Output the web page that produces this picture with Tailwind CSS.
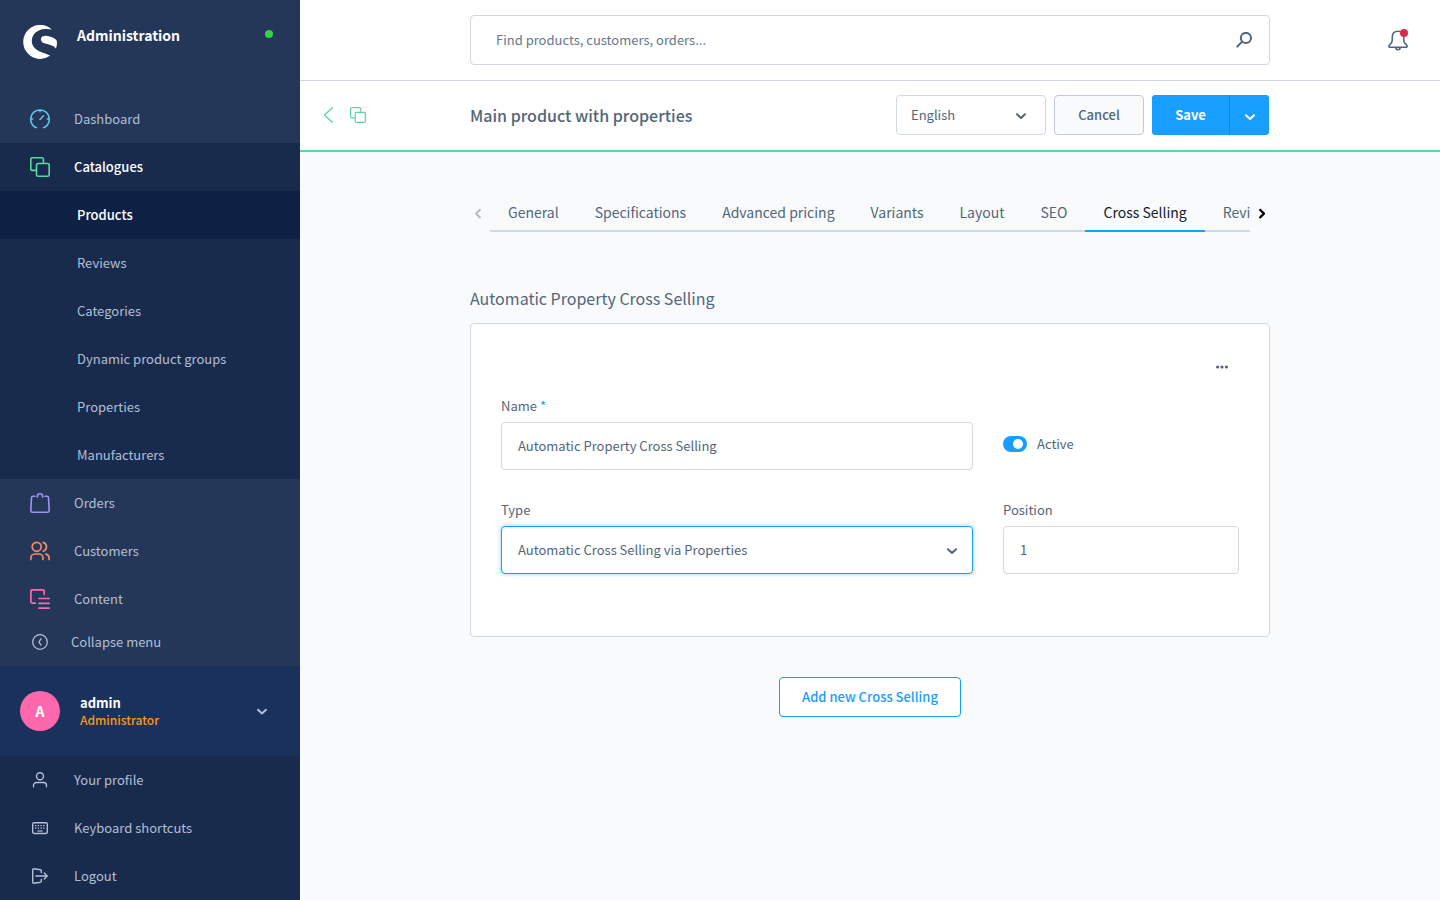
<!DOCTYPE html>
<html lang="en">
<head>
<meta charset="utf-8">
<meta name="viewport" content="width=device-width, initial-scale=1">
<title>Main product with properties | Administration</title>
<script src="https://cdn.jsdelivr.net/npm/@tailwindcss/browser@4"></script>
</head>
<body class="flex h-screen overflow-hidden bg-[#f9fafc] font-['Noto_Sans_CJK_SC','Noto_Sans',sans-serif] text-[13px] leading-5 text-[#52667a]">

<aside class="flex w-[300px] shrink-0 flex-col overflow-hidden bg-[#243758] text-[#b3bfd5]">
  <header class="flex h-[95px] shrink-0 items-start pl-[23px] pr-[27px] pt-[25px]">
    <svg class="size-[34px] shrink-0" viewBox="0 0 34 34" fill="#fff" aria-hidden="true">
      <path d="M28.800 4.400A17 17 0 1 0 27 30.800C26.500 29.500 21 28.400 16.300 26.200C11.500 23.800 8.800 20.500 8.800 16C8.800 9 14.500 4.500 22 4C25 3.800 27 4.100 28.800 4.400Z"/>
      <path d="M32.900 23.400C31.300 21.300 27 19.600 22.500 18.600C19.300 17.800 17.900 16.200 17.900 14.200C17.900 11.800 20.500 10.600 24 10.900C28 11.300 31.800 12.800 33.700 15.400C34.200 18 34 21 32.900 23.400Z"/>
    </svg>
    <h2 class="ml-5 flex-1 text-[14px] font-bold text-white">Administration</h2>
    <span class="mt-[5px] size-2 rounded-full bg-[#37d046]"></span>
  </header>

  <nav class="shrink-0" aria-label="Main">
    <a href="#" class="flex h-12 items-center gap-6 pl-[30px]">
      <svg class="size-5" viewBox="0 0 20 20" fill="none" stroke="#5fc8e8" stroke-width="1.500" stroke-linecap="round" aria-hidden="true"><path d="M6.500 18.400H5.500A9.300 9.300 0 1 1 14.500 18.400H13.500M10 .8V2.700M.8 10H2.700M17.300 10H19.200M10 10.500L13.500 6.700"/></svg>
      Dashboard</a>
    <a href="#" class="flex h-12 items-center gap-6 bg-[#182b4d] pl-[30px] font-medium text-white">
      <svg class="size-5" viewBox="0 0 20 20" fill="none" stroke="#57d9a3" stroke-width="1.600" aria-hidden="true"><path d="M6 13.400H2.200A1.500 1.500 0 0 1 .8 11.900V2.200A1.500 1.500 0 0 1 2.200 .8H11.900A1.500 1.500 0 0 1 13.400 2.200V6"/><rect x="6.500" y="6.500" width="12.700" height="12.700" rx="1.500"/></svg>
      Catalogues</a>
    <ul class="bg-[#182b4d]">
      <li><a href="#" aria-current="page" class="flex h-12 items-center bg-[#0e2145] pl-[77px] font-medium text-white">Products</a></li>
      <li><a href="#" class="flex h-12 items-center pl-[77px]">Reviews</a></li>
      <li><a href="#" class="flex h-12 items-center pl-[77px]">Categories</a></li>
      <li><a href="#" class="flex h-12 items-center pl-[77px]">Dynamic product groups</a></li>
      <li><a href="#" class="flex h-12 items-center pl-[77px]">Properties</a></li>
      <li><a href="#" class="flex h-12 items-center pl-[77px]">Manufacturers</a></li>
    </ul>
    <a href="#" class="flex h-12 items-center gap-6 pl-[30px]">
      <svg class="size-5" viewBox="0 0 20 20" fill="none" stroke="#a092f0" stroke-width="1.600" stroke-linecap="round" stroke-linejoin="round" aria-hidden="true"><path d="M7.400 4.300V3.400A2.600 2.600 0 0 1 12.600 3.400V4.300M5 3.300H2.800A1.300 1.300 0 0 0 1.500 4.500L.8 17.800A1.400 1.400 0 0 0 2.100 19.200H17.900A1.400 1.400 0 0 0 19.200 17.800L18.500 4.500A1.300 1.300 0 0 0 17.200 3.300H15"/></svg>
      Orders</a>
    <a href="#" class="flex h-12 items-center gap-6 pl-[30px]">
      <svg class="size-5" viewBox="0 0 20 20" fill="none" stroke="#f88962" stroke-width="1.700" stroke-linecap="round" aria-hidden="true"><circle cx="6.700" cy="5.800" r="4.500"/><path d="M.9 18.500V17A4 4 0 0 1 4.800 13H9A4 4 0 0 1 13 17V18.500M13.200 1.400A4.600 4.600 0 0 1 13.200 10.200M15.800 13.200A4 4 0 0 1 19.100 17V18.500"/></svg>
      Customers</a>
    <a href="#" class="flex h-12 items-center gap-6 pl-[30px]">
      <svg class="size-5" viewBox="0 0 20 20" fill="none" stroke="#ff68b4" stroke-width="1.700" stroke-linecap="round" aria-hidden="true"><path d="M5.300 14.200H2.200A1.500 1.500 0 0 1 .9 12.700V2.200A1.500 1.500 0 0 1 2.200 .9H12.700A1.500 1.500 0 0 1 14.200 2.200V5.300M9 9.500H19.100M9 14.300H19.100M9 19.100H19.100"/></svg>
      Content</a>
  </nav>

  <button type="button" class="flex h-[43px] shrink-0 items-center gap-[23px] pb-1.5 pl-8 text-left">
    <svg class="size-4" viewBox="0 0 16 16" fill="none" stroke="currentColor" stroke-linecap="round" stroke-linejoin="round" aria-hidden="true"><circle cx="8" cy="8" r="7.300" stroke-width="1.300"/><path stroke-width="1.300" d="M9 4.800L6.900 8L9 11.200"/></svg>
    Collapse menu</button>

  <button type="button" aria-expanded="true" class="flex h-[90px] shrink-0 items-center bg-[#1a315c] pl-5 pr-8 text-left">
    <span class="flex size-10 items-center justify-center rounded-full bg-[#ff68ac] text-[14px] font-bold text-white">A</span>
    <span class="ml-5 flex flex-1 flex-col">
      <span class="leading-[18px] font-bold text-white">admin</span>
      <span class="text-[12px] leading-4 font-medium text-[#ff9512]">Administrator</span>
    </span>
    <svg class="h-3 w-3" viewBox="0 0 12 12" fill="none" stroke="#b3bfd5" stroke-width="2" stroke-linecap="round" stroke-linejoin="round" aria-hidden="true"><path d="M2 4.800L6 8.500L10 4.800"/></svg>
  </button>

  <nav class="flex-1 bg-[#182b4d]" aria-label="Account">
    <a href="#" class="flex h-12 items-center gap-[26px] pl-8">
      <svg class="size-4" viewBox="0 0 16 16" fill="none" stroke="currentColor" stroke-width="1.400" stroke-linecap="round" aria-hidden="true"><circle cx="8" cy="4.300" r="3.500"/><path d="M1.500 14.800V13.500A3 3 0 0 1 4.500 10.500H11.500A3 3 0 0 1 14.500 13.500V14.800"/></svg>
      Your profile</a>
    <a href="#" class="flex h-12 items-center gap-[26px] pl-8">
      <svg class="size-4" viewBox="0 0 16 16" fill="none" stroke="currentColor" stroke-width="1.400" aria-hidden="true"><rect x=".7" y="2.700" width="14.600" height="10.800" rx="1.500"/><path stroke-width="1.200" stroke-dasharray="1.400 1.300" d="M3 5.600H13.400M3 8.200H13.400"/><path stroke-width="1.200" d="M5.300 11H10.700"/></svg>
      Keyboard shortcuts</a>
    <a href="#" class="flex h-12 items-center gap-[26px] pl-8">
      <svg class="size-4" viewBox="0 0 16 16" fill="none" stroke="currentColor" stroke-width="1.400" stroke-linecap="round" stroke-linejoin="round" aria-hidden="true"><path d="M9.300 4.500V2.700A1 1 0 0 0 8.500 1.700L1.800 .8A1 1 0 0 0 .7 1.700V14.300A1 1 0 0 0 1.800 15.200L8.500 14.300A1 1 0 0 0 9.300 13.300V11.500M3.800 8H15.200M12.300 5L15.200 8L12.300 11"/></svg>
      Logout</a>
  </nav>
</aside>

<div class="flex min-w-0 flex-1 flex-col">
  <header class="grid h-[81px] shrink-0 grid-cols-[1fr_minmax(0,800px)_1fr] items-center border-b border-[#d1d9e0] bg-white">
    <form role="search" class="col-start-2 flex h-[50px] items-center rounded border border-[#d1d9e0] pl-[25px] pr-[17px]">
      <input type="search" aria-label="Search" placeholder="Find products, customers, orders..." class="min-w-0 flex-1 leading-6 outline-none placeholder:text-[#66788a]">
      <button type="submit" aria-label="Search">
        <svg class="size-4" viewBox="0 0 16 16" fill="none" stroke="#52667a" stroke-width="2" stroke-linecap="round" aria-hidden="true"><circle cx="9.900" cy="6" r="5.100"/><path d="M6 9.800L1.200 14.600"/></svg>
      </button>
    </form>
    <button type="button" aria-label="Notifications" class="relative mr-8 justify-self-end">
      <svg class="h-[22px] w-5" viewBox="0 0 20 22" fill="none" stroke="#52667a" stroke-width="1.600" stroke-linejoin="round" aria-hidden="true"><path d="M10 2.200C6.500 2.200 4.300 4.300 4.300 7.800V11C4.300 12.800 3.600 14 2 15.300C.5 16.500 .4 18.300 2 18.300H18C19.600 18.300 19.500 16.500 18 15.300C16.400 14 15.700 12.800 15.700 11V7.800C15.700 4.300 13.500 2.200 10 2.200ZM7.800 18.600A2.200 2.200 0 0 0 12.200 18.600"/></svg>
      <span class="absolute right-0 top-0 size-2 rounded-full bg-[#de294c]"></span>
    </button>
  </header>

  <div class="grid h-[71px] shrink-0 grid-cols-[1fr_minmax(0,800px)_1fr] items-center border-b-2 border-[#57d9a3] bg-white pb-px">
    <div class="flex items-center gap-4 pl-[23px]">
      <a href="#" aria-label="Back">
        <svg class="h-4 w-[11px]" viewBox="0 0 11 16" fill="none" stroke="#57d9a3" stroke-width="1.300" stroke-linecap="round" stroke-linejoin="round" aria-hidden="true"><path d="M9.300 .8L1.500 8L9.300 15.200"/></svg>
      </a>
      <svg class="size-4" viewBox="0 0 16 16" fill="none" stroke="#57d9a3" stroke-width="1.200" aria-hidden="true"><path d="M5 10.800H1.800A1.200 1.200 0 0 1 .6 9.600V1.800A1.200 1.200 0 0 1 1.800 .6H9.600A1.200 1.200 0 0 1 10.800 1.800V5"/><rect x="5.300" y="5.300" width="10.100" height="10.100" rx="1.200"/></svg>
    </div>
    <div class="flex items-center">
      <h1 class="flex-1 text-[16px] leading-6 font-medium">Main product with properties</h1>
      <div class="relative">
        <select aria-label="Language" class="block h-10 w-[150px] appearance-none rounded border border-[#d1d9e0] bg-white pl-[14px] pr-8">
          <option>English</option>
        </select>
        <svg class="pointer-events-none absolute right-[19px] top-[15px] h-3 w-3" viewBox="0 0 12 12" fill="none" stroke="#52667a" stroke-width="2" stroke-linecap="round" stroke-linejoin="round" aria-hidden="true"><path d="M2 4.300L6 8L10 4.300"/></svg>
      </div>
      <button type="button" class="ml-2 h-10 w-[90px] rounded border border-[#c2cad6] bg-[#f9fafc] font-medium">Cancel</button>
      <div class="ml-2 mr-px flex gap-px overflow-hidden rounded bg-[#0f84e0]">
        <button type="button" class="h-10 w-[77px] bg-[#189eff] font-bold text-white">Save</button>
        <button type="button" aria-label="More save options" class="flex h-10 w-[39px] items-center justify-center bg-[#189eff] pt-1">
          <svg class="h-3 w-3" viewBox="0 0 12 12" fill="none" stroke="#fff" stroke-width="2" stroke-linecap="round" stroke-linejoin="round" aria-hidden="true"><path d="M2 4.300L6 8L10 4.300"/></svg>
        </button>
      </div>
    </div>
  </div>

  <main class="flex-1 overflow-auto">
    <div class="mx-auto w-full max-w-[800px] pt-[42px]">
      <div class="flex h-[38px]">
        <button type="button" aria-label="Scroll tabs left" class="flex w-5 shrink-0 items-center pl-[3px]">
          <svg class="h-3 w-3" viewBox="0 0 12 12" fill="none" stroke="#b8b8b8" stroke-width="2" stroke-linejoin="round" aria-hidden="true"><path d="M7.500 2.200L3 6.600L7.500 11"/></svg>
        </button>
        <nav aria-label="Product sections" class="flex min-w-0 flex-1 overflow-hidden text-[14px] leading-9 whitespace-nowrap">
          <a href="#" class="border-b-2 border-[#d1d9e0] px-[18px]">General</a>
          <a href="#" class="border-b-2 border-[#d1d9e0] px-[18px]">Specifications</a>
          <a href="#" class="border-b-2 border-[#d1d9e0] px-[18px]">Advanced pricing</a>
          <a href="#" class="border-b-2 border-[#d1d9e0] px-[18px]">Variants</a>
          <a href="#" class="border-b-2 border-[#d1d9e0] px-[18px]">Layout</a>
          <a href="#" class="border-b-2 border-[#d1d9e0] px-[18px]">SEO</a>
          <a href="#" aria-current="page" class="border-b-2 border-[#189eff] px-[18px] text-[#142028]">Cross Selling</a>
          <a href="#" class="border-b-2 border-[#d1d9e0] px-[18px]">Reviews</a>
        </nav>
        <button type="button" aria-label="Scroll tabs right" class="flex w-5 shrink-0 items-center justify-end pr-0.5">
          <svg class="h-3 w-3" viewBox="0 0 12 12" fill="none" stroke="#000" stroke-width="2.200" stroke-linejoin="round" aria-hidden="true"><path d="M3.500 2.200L8 6.600L3.500 11"/></svg>
        </button>
      </div>

      <h2 class="mt-[54px] text-[16px] leading-6">Automatic Property Cross Selling</h2>
      <section class="mt-[13px] rounded border border-[#d1d9e0] bg-white px-[30px] pb-[62px] pt-8">
        <div class="flex justify-end">
          <button type="button" aria-label="Actions" class="flex h-[22px] w-[34px] items-center justify-center">
            <svg class="h-3 w-3" viewBox="0 0 12 12" fill="#52667a" aria-hidden="true"><circle cx="1.600" cy="6" r="1.600"/><circle cx="6" cy="6" r="1.600"/><circle cx="10.400" cy="6" r="1.600"/></svg>
          </button>
        </div>
        <form class="mt-[18px] grid grid-cols-[2fr_1fr] gap-[30px]">
          <div>
            <label for="name" class="block h-[26px]">Name <span class="text-[#189eff]">*</span></label>
            <input id="name" type="text" required value="Automatic Property Cross Selling" class="block h-12 w-full rounded border border-[#d1d9e0] bg-white px-4 pb-0.5 outline-none">
          </div>
          <label class="flex items-center gap-[10px] pt-[22px]">
            <input type="checkbox" role="switch" checked class="h-4 w-6 appearance-none rounded-full bg-[#189eff] before:ml-[10px] before:mt-[3px] before:block before:size-[10px] before:rounded-full before:bg-white">
            Active
          </label>
          <div>
            <label for="type" class="block h-[26px]">Type</label>
            <div class="relative">
              <select id="type" class="block h-12 w-full appearance-none rounded border border-[#189eff] bg-white pl-4 pr-10 shadow-[0_0_4px_#8acbfa] outline-none">
                <option>Automatic Cross Selling via Properties</option>
              </select>
              <svg class="pointer-events-none absolute right-[15px] top-[19px] h-3 w-3" viewBox="0 0 12 12" fill="none" stroke="#52667a" stroke-width="2" stroke-linecap="round" stroke-linejoin="round" aria-hidden="true"><path d="M2 4.300L6 8L10 4.300"/></svg>
            </div>
          </div>
          <div>
            <label for="position" class="block h-[26px]">Position</label>
            <input id="position" type="text" inputmode="numeric" value="1" class="block h-12 w-full rounded border border-[#d1d9e0] bg-white px-4 pb-0.5 outline-none">
          </div>
        </form>
      </section>

      <div class="mt-10 flex justify-center">
        <button type="button" class="h-10 rounded border border-[#189eff] bg-white px-[22px] font-medium text-[#189eff]">Add new Cross Selling</button>
      </div>
    </div>
  </main>
</div>
</body>
</html>
